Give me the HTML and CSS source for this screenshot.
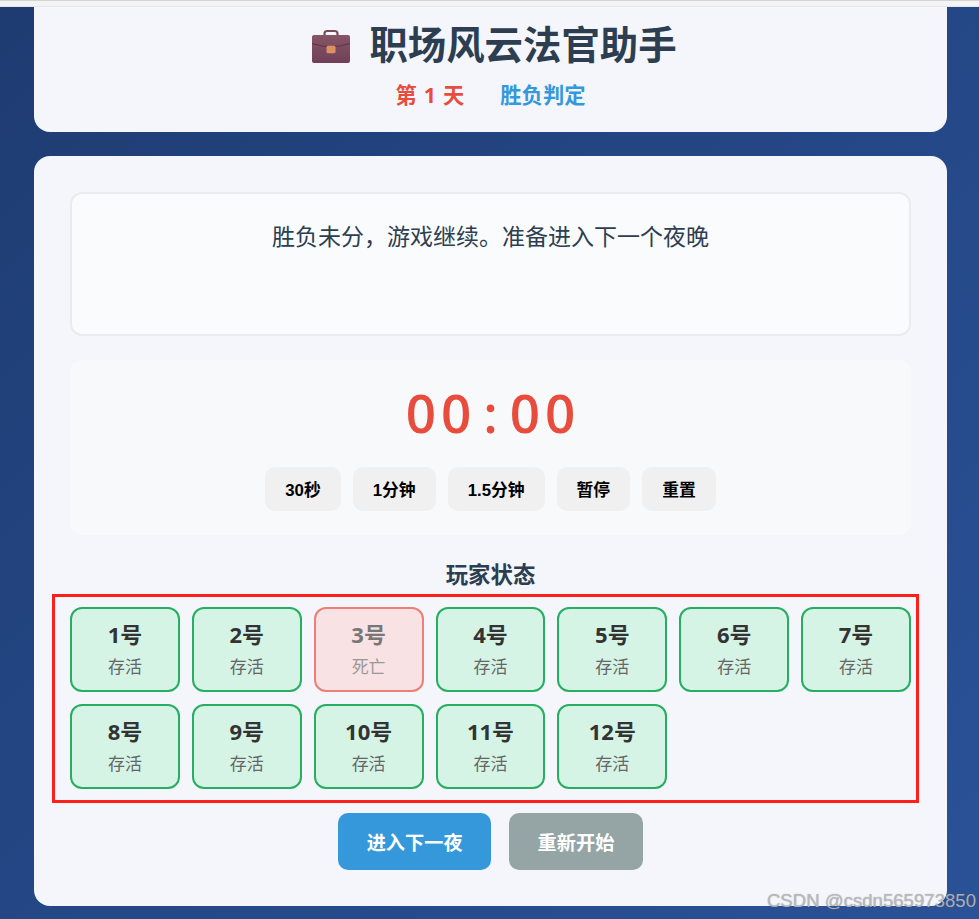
FILE: index.html
```html
<!DOCTYPE html>
<html>
    <head>
        <title>职场风云法官助手</title>
        <link rel="stylesheet" href="styles.css">
    </head>
    <body>
        <div class="top_strip"></div>
        <div class="page">
            <div class="header">
                <h1 class="title">
                    <svg class="title_icon" viewBox="0 0 40 36" width="40" height="36">
                        <defs>
                            <linearGradient id="case_fill" x1="0" y1="0" x2="0" y2="1">
                                <stop offset="0" stop-color="#865566"/>
                                <stop offset="1" stop-color="#6f4058"/>
                            </linearGradient>
                        </defs>
                        <path d="M13.500 7 V4.500 Q13.500 2 16.500 2 H23.500 Q26.500 2 26.500 4.500 V7" fill="none" stroke="#7a4a55" stroke-width="2.200"/>
                        <rect x="1" y="6" width="38" height="28" rx="2" fill="url(#case_fill)"/>
                        <path d="M1 14.500 Q20 21 39 14.500" fill="none" stroke="#5d3145" stroke-width="1"/>
                        <rect x="15.500" y="16.700" width="9" height="7.600" rx="1.500" fill="#e08f5f"/>
                    </svg>
                    <span>职场风云法官助手</span>
                </h1>
                <div class="sub_title">
                    <span class="day">第 1 天</span>
                    <span class="phase">胜负判定</span>
                </div>
            </div>

            <div class="main">
                <div class="message">胜负未分，游戏继续。准备进入下一个夜晚</div>

                <div class="timer">
                    <div class="time">00<span class="colon">:</span>00</div>
                    <div class="timer_buttons">
                        <button class="timer_btn">30秒</button>
                        <button class="timer_btn">1分钟</button>
                        <button class="timer_btn">1.5分钟</button>
                        <button class="timer_btn">暂停</button>
                        <button class="timer_btn">重置</button>
                    </div>
                </div>

                <h3 class="players_title">玩家状态</h3>
                <div class="players_mark">
                    <div class="players">
                        <div class="player"><div class="num">1号</div><div class="state">存活</div></div>
                        <div class="player"><div class="num">2号</div><div class="state">存活</div></div>
                        <div class="player dead"><div class="num">3号</div><div class="state">死亡</div></div>
                        <div class="player"><div class="num">4号</div><div class="state">存活</div></div>
                        <div class="player"><div class="num">5号</div><div class="state">存活</div></div>
                        <div class="player"><div class="num">6号</div><div class="state">存活</div></div>
                        <div class="player"><div class="num">7号</div><div class="state">存活</div></div>
                        <div class="player"><div class="num">8号</div><div class="state">存活</div></div>
                        <div class="player"><div class="num">9号</div><div class="state">存活</div></div>
                        <div class="player"><div class="num">10号</div><div class="state">存活</div></div>
                        <div class="player"><div class="num">11号</div><div class="state">存活</div></div>
                        <div class="player"><div class="num">12号</div><div class="state">存活</div></div>
                    </div>
                </div>

                <div class="actions">
                    <button class="action next">进入下一夜</button>
                    <button class="action restart">重新开始</button>
                </div>
            </div>
        </div>
        <div class="watermark">CSDN @csdn565973850</div>
    </body>
</html>
```

FILE: styles.css
```css
html, body {
    margin: 0;
    height: 919px;
    overflow: hidden;
}
body {
    position: relative;
    background: linear-gradient(135deg, #1e3c72, #2a5298);
    font-family: "Open Sans", "Noto Sans CJK SC", sans-serif;
    color: #2c3e50;
}
.top_strip {
    height: 5px;
    background: #f4f4f4;
    border-top: 1px solid #d4d4d4;
    border-bottom: 1px solid #e6e6e6;
}
.page {
    width: 913px;
    margin-left: 34px;
}
.header {
    height: 125px;
    box-sizing: border-box;
    padding-top: 11px;
    background: #f4f6fb;
    border-radius: 0 0 16px 16px;
    text-align: center;
}
.title {
    display: flex;
    justify-content: center;
    align-items: center;
    gap: 18px;
    margin: 0;
    height: 52px;
    font-size: 38.4px;
    line-height: 52px;
    font-weight: 700;
}
.title_icon {
    margin: 6px 0 0 7px;
}
.sub_title {
    display: flex;
    justify-content: center;
    gap: 36px;
    margin-top: 10px;
    font-size: 21.3px;
    line-height: 30px;
    font-weight: 700;
}
.day {
    color: #e74c3c;
    word-spacing: 1.5px;
}
.phase {
    color: #3498db;
}
.main {
    height: 750px;
    box-sizing: border-box;
    margin-top: 24px;
    padding: 36px 36px 0;
    background: #f4f6fb;
    border-radius: 16px;
}
.message {
    height: 144px;
    box-sizing: border-box;
    padding-top: 25px;
    background: #fafbfc;
    border: 2px solid #e9ecef;
    border-radius: 12px;
    text-align: center;
    font-size: 23px;
    line-height: 34px;
}
.timer {
    height: 175px;
    box-sizing: border-box;
    margin-top: 24px;
    padding-top: 19px;
    background: #f8f9fb;
    border-radius: 12px;
    text-align: center;
}
.time {
    padding-left: 5px;
    font-size: 53px;
    line-height: 68px;
    font-weight: 600;
    letter-spacing: 5px;
    color: #e74c3c;
}
.colon {
    margin: 0 7px;
}
.timer_buttons {
    display: flex;
    justify-content: center;
    gap: 12px;
    margin-top: 20px;
}
.timer_btn {
    height: 44px;
    padding: 0 20px;
    border: 0;
    border-radius: 10px;
    background: #f0f0f0;
    color: #000;
    font-family: "Liberation Sans", "Noto Sans CJK SC", sans-serif;
    font-size: 16.800px;
    font-weight: 700;
}
.players_title {
    margin: 25px 0 0;
    text-align: center;
    font-size: 22.400px;
    line-height: 30px;
    font-weight: 700;
}
.players_mark {
    margin: 4px -8px 0 -18px;
    padding: 10px 5px 11px 15px;
    border: 3px solid #ff1f1a;
}
.players {
    display: grid;
    grid-template-columns: repeat(7, 1fr);
    gap: 12px;
}
.player {
    height: 85px;
    box-sizing: border-box;
    padding-top: 10px;
    background: #d5f4e6;
    border: 2px solid #27ae60;
    border-radius: 12px;
    text-align: center;
}
.num {
    font-size: 22px;
    line-height: 30px;
    font-weight: 700;
    color: #333;
}
.state {
    margin-top: 6px;
    font-size: 17px;
    line-height: 24px;
    color: #666;
}
.dead {
    background: #f9e2e3;
    border-color: #ee7f76;
}
.dead .num {
    color: #777;
}
.dead .state {
    color: #999;
}
.actions {
    display: flex;
    justify-content: center;
    gap: 18px;
    margin-top: 10px;
}
.action {
    height: 57px;
    padding: 0 28.500px;
    border: 0;
    border-radius: 10px;
    color: #fff;
    font-family: "Open Sans", "Noto Sans CJK SC", sans-serif;
    font-size: 19.200px;
    font-weight: 700;
}
.next {
    background: #3498db;
}
.restart {
    background: #95a5a6;
}
.watermark {
    position: absolute;
    right: 3px;
    bottom: 7px;
    font-family: "Liberation Sans", sans-serif;
    font-size: 18.600px;
    line-height: 22px;
    color: rgba(190, 190, 190, 0.85);
    text-shadow: 0 0 1px rgba(90, 90, 90, 0.6);
}
```
